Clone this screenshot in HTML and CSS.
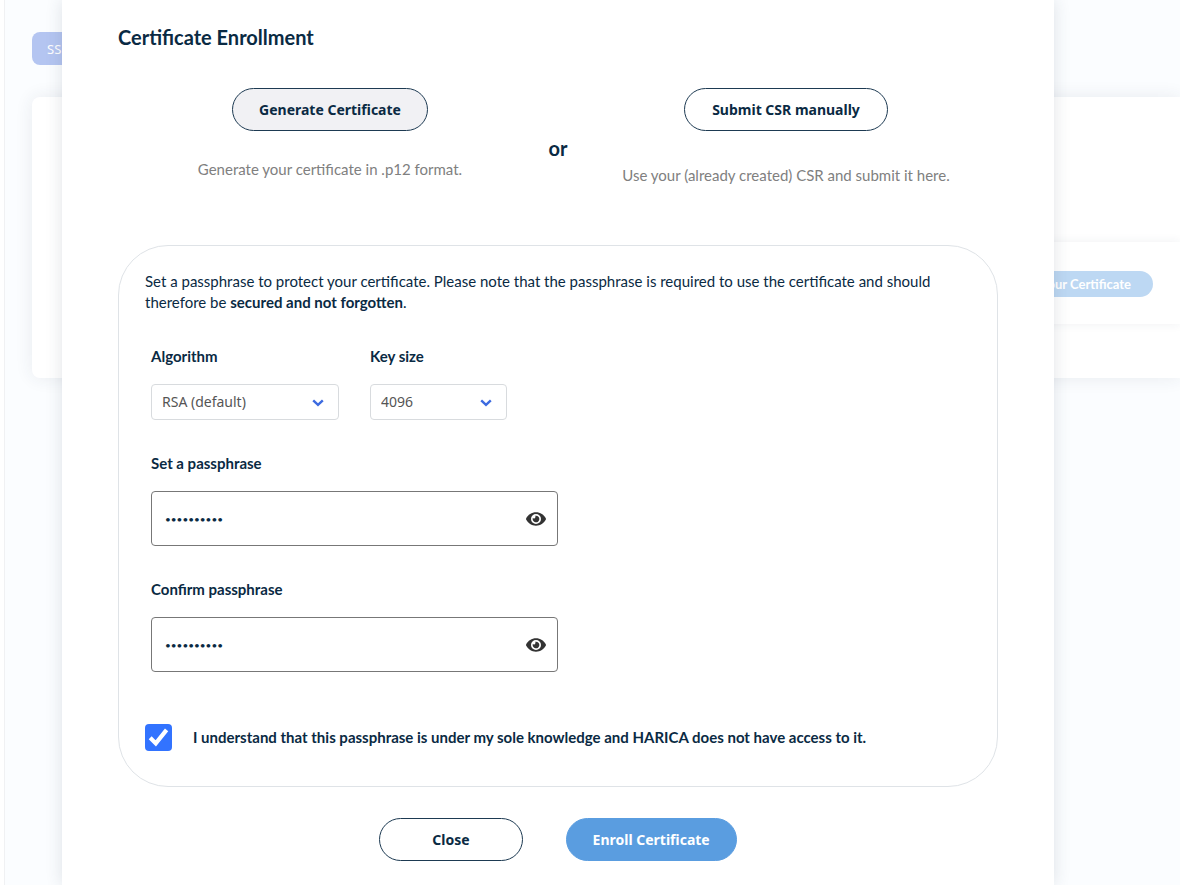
FILE: index.html
```html
<!DOCTYPE html>
<html lang="en">
<head>
<meta charset="utf-8">
<title>Certificate Enrollment</title>
<link rel="stylesheet" href="styles.css">
</head>
<body>
<div class="page">
  <button class="tab" type="button">SSL</button>
  <div class="card">
    <div class="card-row"><button class="pill" type="button">Enroll your Certificate</button></div>
  </div>
</div>
<div class="overlay">
  <main class="modal" role="dialog" aria-labelledby="title">
    <h1 class="title" id="title">Certificate Enrollment</h1>
    <section class="choices">
      <div class="choice">
        <button class="btn btn-selected" type="button">Generate Certificate</button>
        <p class="hint">Generate your certificate in .p12 format.</p>
      </div>
      <div class="or">or</div>
      <div class="choice choice-manual">
        <button class="btn" type="button">Submit CSR manually</button>
        <p class="hint">Use your (already created) CSR and submit it here.</p>
      </div>
    </section>
    <form class="form">
      <div class="panel">
        <p class="intro">Set a passphrase to protect your certificate. Please note that the passphrase is required to use the certificate and should therefore be <strong>secured and not forgotten</strong>.</p>
        <div class="fields">
          <div class="selects">
            <div class="field field-algorithm">
              <label class="label" for="algorithm">Algorithm</label>
              <div class="select-wrap">
                <select class="select" id="algorithm"><option>RSA (default)</option><option>ECDSA</option></select>
                <svg class="chevron" viewBox="0 0 12 8" aria-hidden="true"><path d="M1.2 1.3 6 5.9 10.8 1.3"/></svg>
              </div>
            </div>
            <div class="field field-size">
              <label class="label" for="size">Key size</label>
              <div class="select-wrap">
                <select class="select" id="size"><option>4096</option><option>2048</option></select>
                <svg class="chevron" viewBox="0 0 12 8" aria-hidden="true"><path d="M1.2 1.3 6 5.9 10.8 1.3"/></svg>
              </div>
            </div>
          </div>
          <div class="field field-pass">
            <label class="label" for="pass">Set a passphrase</label>
            <div class="input-wrap">
              <input class="input" id="pass" type="password" value="abcdefghij">
              <button class="eye" type="button" aria-label="Show passphrase"><svg viewBox="0 0 576 512" aria-hidden="true"><path d="M572.52 241.4C518.29 135.59 410.93 64 288 64S57.68 135.64 3.48 241.41a32.35 32.35 0 0 0 0 29.19C57.71 376.41 165.07 448 288 448s230.32-71.64 284.52-177.41a32.35 32.35 0 0 0 0-29.19zM288 400a144 144 0 1 1 144-144 143.93 143.93 0 0 1-144 144zm0-240a95.31 95.31 0 0 0-25.31 3.79 47.85 47.85 0 0 1-66.9 66.9A95.78 95.78 0 1 0 288 160z"/></svg></button>
            </div>
          </div>
          <div class="field field-pass">
            <label class="label" for="confirm">Confirm passphrase</label>
            <div class="input-wrap">
              <input class="input" id="confirm" type="password" value="abcdefghij">
              <button class="eye" type="button" aria-label="Show confirmation"><svg viewBox="0 0 576 512" aria-hidden="true"><path d="M572.52 241.4C518.29 135.59 410.93 64 288 64S57.68 135.64 3.48 241.41a32.35 32.35 0 0 0 0 29.19C57.71 376.41 165.07 448 288 448s230.32-71.64 284.52-177.41a32.35 32.35 0 0 0 0-29.19zM288 400a144 144 0 1 1 144-144 143.93 143.93 0 0 1-144 144zm0-240a95.31 95.31 0 0 0-25.31 3.79 47.85 47.85 0 0 1-66.9 66.9A95.78 95.78 0 1 0 288 160z"/></svg></button>
            </div>
          </div>
        </div>
        <div class="consent">
          <span class="check-wrap">
            <input class="check" id="consent" type="checkbox" checked>
            <svg class="tick" viewBox="0 0 26 26" aria-hidden="true"><path d="M5 13.3 10.4 18.7 20.8 5.7"/></svg>
          </span>
          <label class="consent-label" for="consent">I understand that this passphrase is under my sole knowledge and HARICA does not have access to it.</label>
        </div>
      </div>
      <div class="actions">
        <button class="btn btn-close" type="button">Close</button>
        <button class="btn btn-primary" type="button">Enroll Certificate</button>
      </div>
    </form>
  </main>
</div>
</body>
</html>
```
FILE: styles.css
```css
* { box-sizing: border-box; }

body {
  margin: 0;
  min-height: 100vh;
  overflow: hidden;
  background: #fff;
  color: #0a2a43;
  font: 15px/21px Lato, sans-serif;
}

h1, p { margin: 0; }
button, input, select { font: inherit; color: inherit; }

.page {
  min-height: 100vh;
  margin-left: 4px;
  padding: 32px 0 0 27px;
  border-left: 1px solid #f0f1f3;
  background: #fbfdff;
}

.tab {
  display: block;
  height: 33px;
  padding: 0 15px;
  border: 0;
  border-radius: 8px;
  background: #b4c5f1;
  color: #fff;
  font: 13px/20px "Noto Sans", sans-serif;
}

.card {
  margin-top: 32px;
  padding: 145px 0 54px;
  border-radius: 8px 0 0 8px;
  background: #fff;
  box-shadow: 0 0 18px rgba(40, 60, 80, .09);
}

.card-row {
  display: flex;
  justify-content: flex-end;
  margin-left: 60px;
  padding: 29px 27px 27px;
  box-shadow: 0 0 10px rgba(40, 60, 80, .07);
}

.pill {
  height: 26px;
  padding: 0 22px;
  border: 0;
  border-radius: 13px;
  background: #bdd8f3;
  color: #fff;
  font-size: 13px;
  font-weight: 700;
}

.overlay {
  position: absolute;
  inset: 0;
  display: flex;
  padding: 0 126px 0 62px;
}

.modal {
  flex: 1;
  padding: 24px 56px;
  background: #fff;
  box-shadow: 0 0 16px rgba(40, 60, 80, .14);
}

.title {
  font-size: 20px;
  line-height: 26px;
  font-weight: 700;
}

.choices {
  display: grid;
  grid-template-columns: 1fr 32px 1fr;
  padding-top: 38px;
}

.choice {
  display: flex;
  flex-direction: column;
  align-items: center;
  gap: 28px;
}

.choice-manual { gap: 34px; }

.btn {
  height: 43px;
  padding: 0 27px;
  border: 1px solid #1d3a52;
  border-radius: 22px;
  background: #fff;
  font: 700 14px/20px "Noto Sans", sans-serif;
}

.btn-selected { padding: 0 26px; background: #f1f1f4; }

.hint { color: #808080; }

.or {
  padding-top: 47px;
  font-size: 20px;
  line-height: 26px;
  font-weight: 700;
  text-align: center;
}

.panel {
  margin-top: 59px;
  padding: 25px 26px 35px;
  border: 1px solid #dfe3e7;
  border-radius: 50px;
}

.intro strong { font-weight: 700; }

.fields {
  display: grid;
  gap: 33px;
  padding: 33px 6px 0;
}

.selects {
  display: flex;
  gap: 31px;
}

.field {
  display: grid;
  gap: 17px;
}

.field-algorithm { width: 188px; }
.field-size { width: 137px; }
.field-pass { max-width: 407px; }

.label { font-weight: 700; }

.select-wrap { position: relative; }

.select {
  display: block;
  width: 100%;
  height: 36px;
  padding: 0 32px 0 10px;
  border: 1px solid #d8dbde;
  border-radius: 4px;
  background: #fff;
  color: #555;
  font: 14px/20px "Noto Sans", sans-serif;
  appearance: none;
}

.chevron {
  position: absolute;
  top: 15px;
  right: 15px;
  width: 12px;
  height: 8px;
  fill: none;
  stroke: #3d6be0;
  stroke-width: 2.4;
  pointer-events: none;
}

.input-wrap {
  display: flex;
  align-items: center;
  height: 55px;
  padding: 0 11px 0 13px;
  border: 1px solid #777;
  border-radius: 4px;
}

.input {
  flex: 1;
  min-width: 0;
  padding: 2px 0 0;
  border: 0;
  outline: 0;
  background: none;
  font-size: 10px;
}

.eye {
  display: flex;
  padding: 0;
  border: 0;
  background: none;
  color: #333;
}

.eye svg {
  width: 20px;
  height: 18px;
  fill: currentColor;
}

.consent {
  display: flex;
  align-items: center;
  gap: 21px;
  padding-top: 52px;
}

.check-wrap {
  position: relative;
  display: flex;
}

.check {
  width: 27px;
  height: 27px;
  margin: 0;
  border-radius: 4px;
  background: #3273ff;
  appearance: none;
}

.tick {
  position: absolute;
  inset: 0;
  fill: none;
  stroke: #fff;
  stroke-width: 4;
  pointer-events: none;
}

.consent-label { font-weight: 700; }

.actions {
  display: flex;
  justify-content: center;
  gap: 43px;
  padding-top: 31px;
}

.btn-close { padding: 0 52px; }

.btn-primary {
  padding: 0 26px;
  border-color: #5a9de0;
  background: #5a9de0;
  color: #fff;
}
```
